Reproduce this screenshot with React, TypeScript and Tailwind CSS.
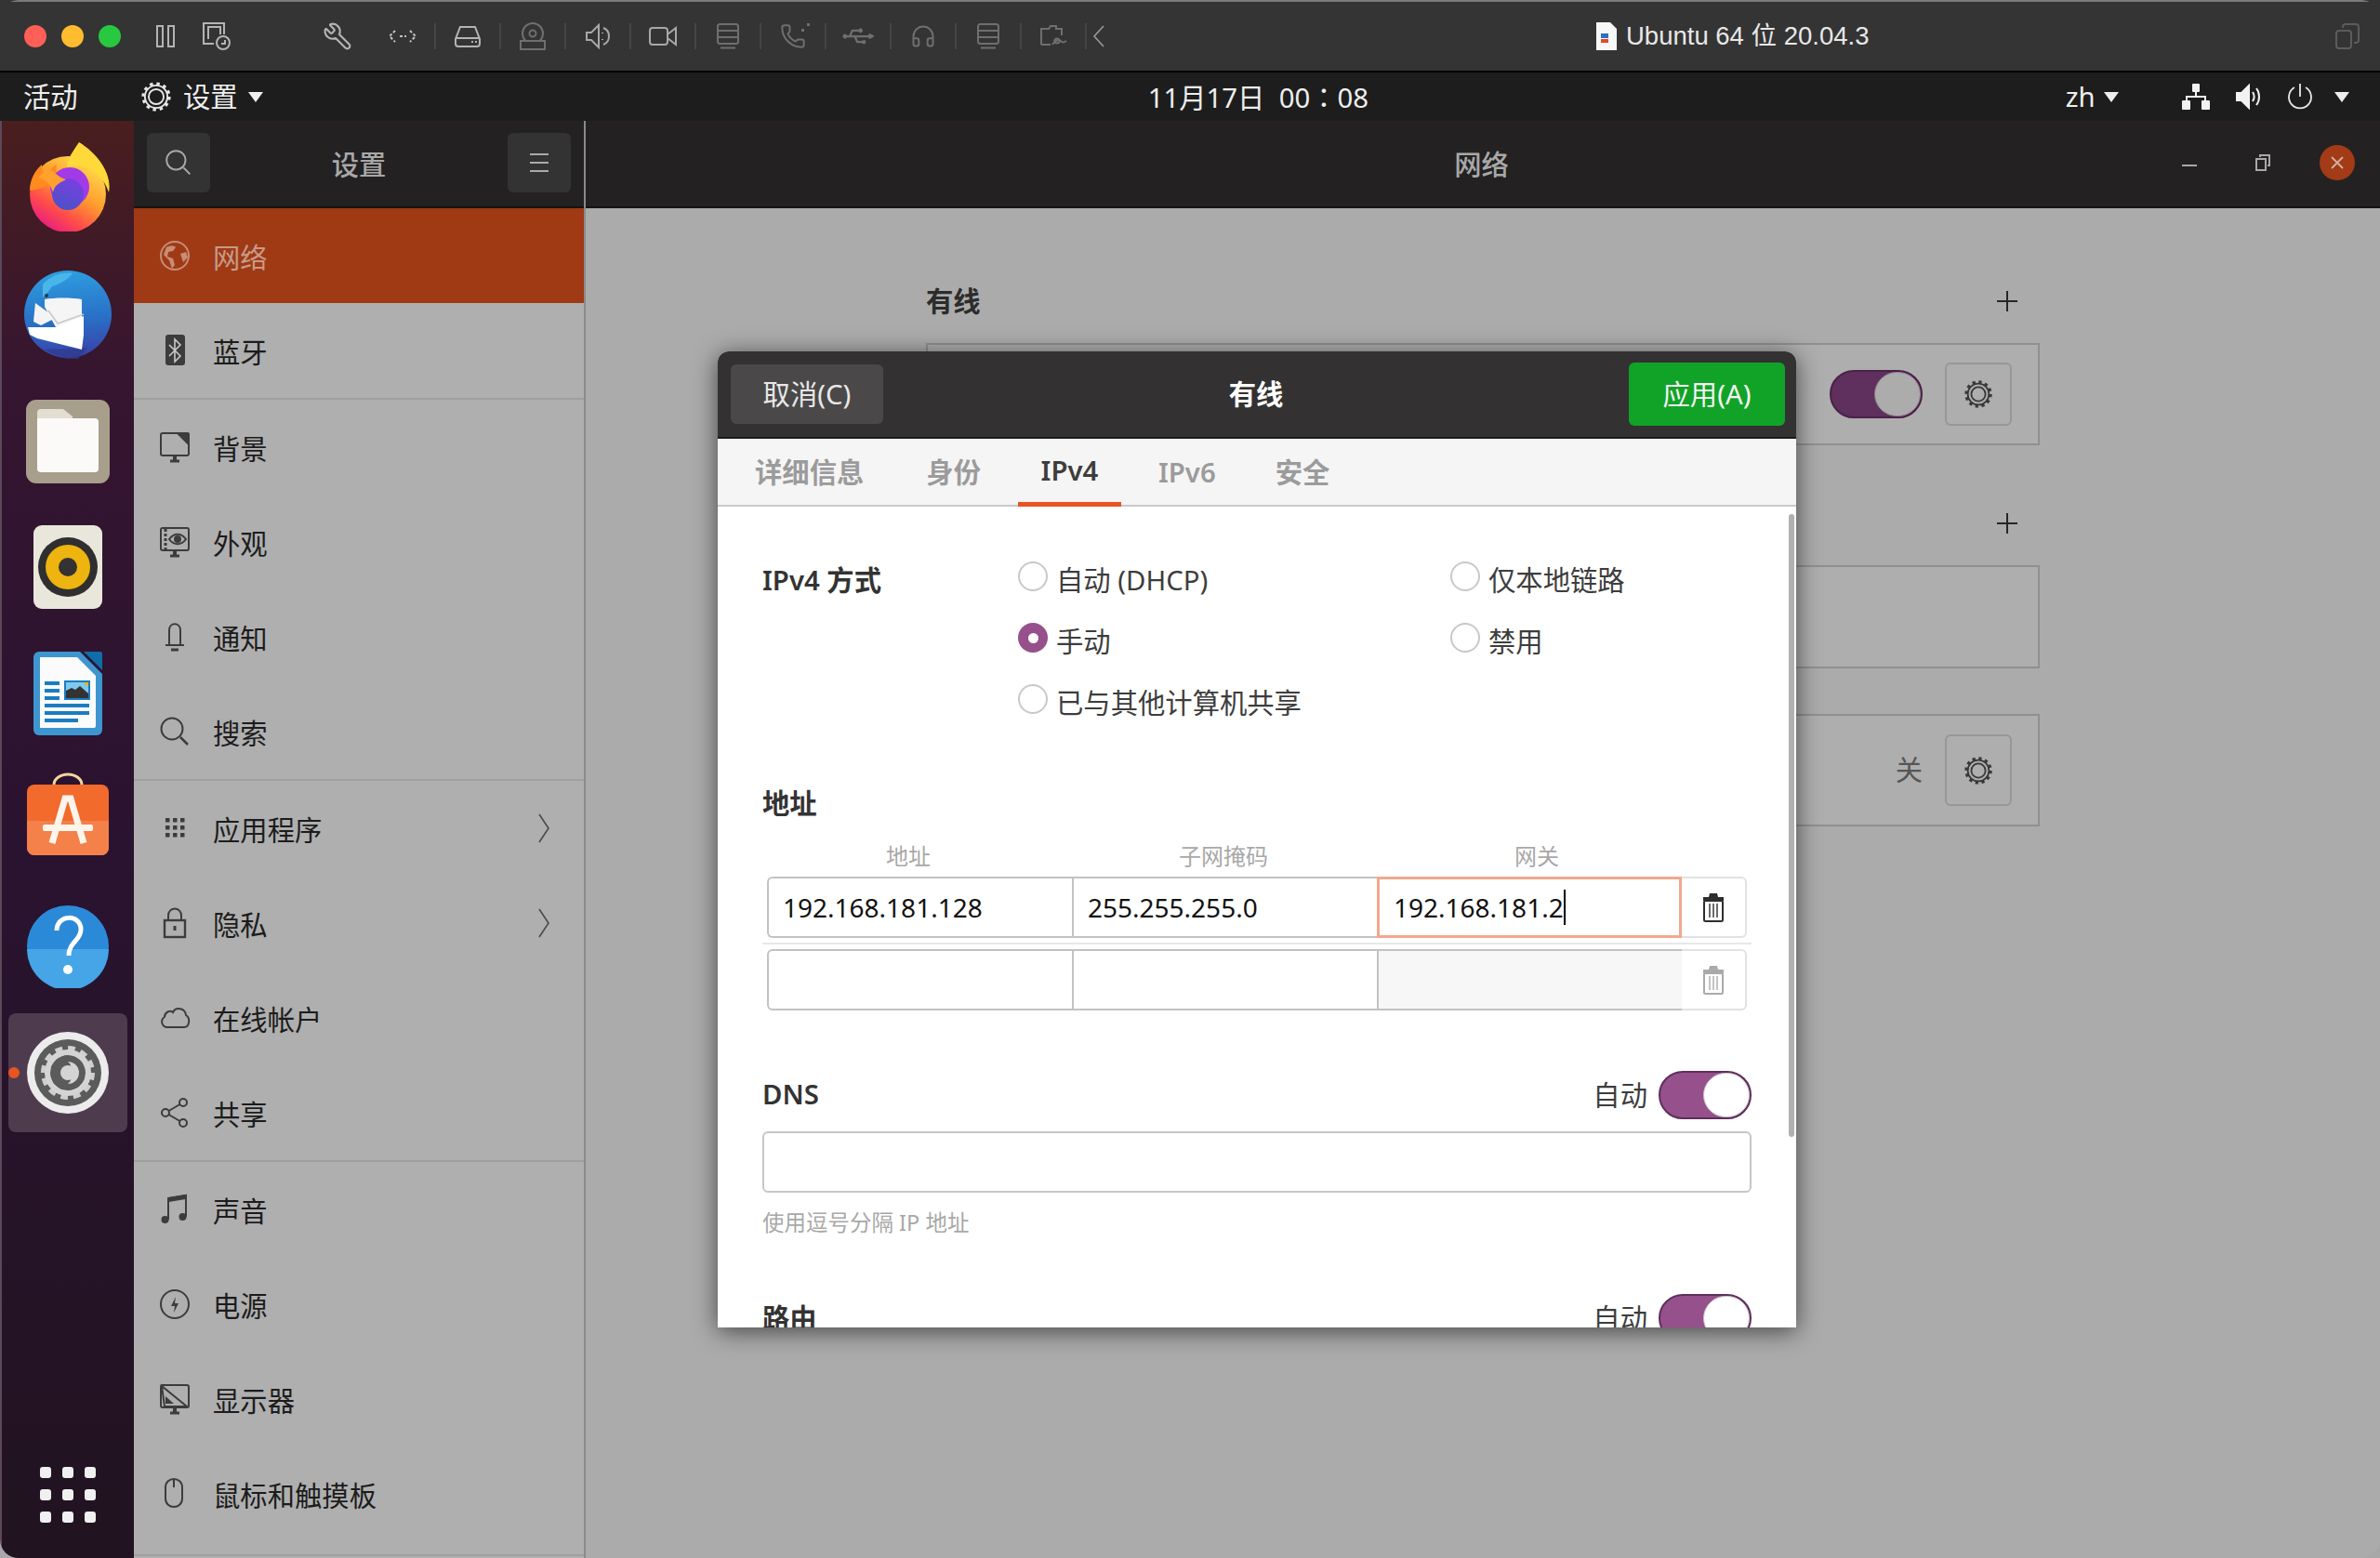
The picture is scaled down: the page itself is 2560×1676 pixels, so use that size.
import { Headphones, Phone, Usb, Wrench } from "lucide-react";
import type { ReactNode } from "react";

const Gear = ({ size = 32, color = "#3a3a3a" }: { size?: number; color?: string }) => (
  <svg width={size} height={size} viewBox="0 0 32 32" fill="none" stroke={color}>
    <circle cx="16" cy="16" r="13" strokeWidth="3.4" strokeDasharray="3.2 3.6" />
    <circle cx="16" cy="16" r="11.4" strokeWidth="1.8" />
    <circle cx="16" cy="16" r="7.6" strokeWidth="1.8" />
  </svg>
);

const Trash = ({ faded }: { faded?: boolean }) => (
  <svg width="26" height="32" viewBox="0 0 26 32" fill="none" className={faded ? "opacity-40" : ""}>
    <path d="M9 1h8l1 4h6v4H2V5h6z" fill="#2e2e2e" />
    <rect x="3" y="9" width="20" height="22" rx="1.5" stroke="#2e2e2e" strokeWidth="2" />
    <path d="M9 12v15M13 12v15M17 12v15" stroke="#2e2e2e" strokeWidth="1.4" />
  </svg>
);

const Tri = ({ w = 16 }: { w?: number }) => (
  <div className="border-t-[11px] border-t-[#eeeeee] border-x-[8px] border-x-transparent" style={{ width: w }} />
);

const Toggle = () => (
  <div className="flex justify-end w-[100px] h-[52px] shrink-0 rounded-full bg-[#96508c] border-2 border-[#5e2f5c]">
    <div className="w-[50px] h-[48px] rounded-full bg-white border border-[#c9c3c9]" />
  </div>
);

const Radio = ({ label, checked }: { label?: string; checked?: boolean }) => (
  <div className="flex items-center h-[66px]">
    {checked ? (
      <div className="flex items-center justify-center w-[32px] h-[32px] rounded-full bg-[#96508c]">
        <div className="w-[11px] h-[11px] rounded-full bg-white" />
      </div>
    ) : (
      <div className="w-[32px] h-[32px] rounded-full bg-white border-2 border-[#c8c8c8]" />
    )}
    <span className="ml-[9px] pt-[9px] text-[#3d3d3d]">{label}</span>
  </div>
);

function toolIcon(i: number) {
  const light = "#b4b4b4";
  const dim = "#6f6f6f";
  switch (i) {
    case 0:
      return (
        <svg width="32" height="14" viewBox="0 0 32 14" fill="none" stroke="#c4c4c4" strokeWidth="2" strokeDasharray="3 2">
          <path d="M8 1 2 7l6 6M24 1l6 6-6 6M13 7h7" />
        </svg>
      );
    case 1:
      return (
        <svg width="30" height="24" viewBox="0 0 30 24" fill="none" stroke={light} strokeWidth="2">
          <path d="M7 2h16l5 13v5a3 3 0 0 1-3 3H5a3 3 0 0 1-3-3v-5zM2 14h26" />
          <path d="M19 18h2M23 18h2" />
        </svg>
      );
    case 2:
      return (
        <svg width="30" height="30" viewBox="0 0 30 30" fill="none" stroke={dim} strokeWidth="2">
          <circle cx="15" cy="12" r="11" />
          <circle cx="15" cy="12" r="3.5" />
          <rect x="2" y="20" width="26" height="9" fill="#343434" />
        </svg>
      );
    case 3:
      return (
        <svg width="28" height="28" viewBox="0 0 28 28" fill="none" stroke="#a8a8a8" strokeWidth="2">
          <path d="M2 10h5l8-8v24l-8-8H2zM19 10v1M19 17v1M20 5c8 3 8 15 0 18" />
        </svg>
      );
    case 4:
      return (
        <svg width="30" height="24" viewBox="0 0 30 24" fill="none" stroke="#a8a8a8" strokeWidth="2">
          <rect x="1" y="3" width="19" height="18" rx="3" />
          <path d="M20 10 29 3v18l-9-7" />
        </svg>
      );
    case 5:
    case 9:
      return (
        <svg width="26" height="28" viewBox="0 0 26 28" fill="none" stroke={dim} strokeWidth="2">
          <rect x="2" y="1" width="22" height="21" rx="2.5" />
          <path d="M2 8h22M2 15h22M5 26.5h16" />
        </svg>
      );
    case 6:
      return (
        <div className="relative">
          <Phone size={28} color={dim} strokeWidth={1.7} />
          <div className="absolute right-[-4px] top-0 w-[3px] h-[3px] bg-[#6f6f6f]" />
          <div className="absolute right-[2px] top-[6px] w-[3px] h-[3px] bg-[#6f6f6f]" />
        </div>
      );
    case 7:
      return <Usb size={30} color={dim} strokeWidth={1.8} className="rotate-[45deg]" />;
    case 8:
      return <Headphones size={28} color={dim} strokeWidth={1.7} />;
    default:
      return (
        <svg width="30" height="26" viewBox="0 0 30 26" fill="none" stroke={dim} strokeWidth="2">
          <path d="M2 22V5h8l2-3h6v3h6v7M2 22h10M14 22c2-3 4-5 7-5s2 5 8 1" />
          <circle cx="19" cy="18" r="2.5" />
        </svg>
      );
  }
}

const MacBar = () => (
  <div className="flex items-center h-[76px] shrink-0 bg-[#343434] border-t-2 border-[#7b7b7b]">
    <div className="flex items-center gap-[16px] ml-[26px]">
      <div className="w-[24px] h-[24px] rounded-full bg-[#ff5f57]" />
      <div className="w-[24px] h-[24px] rounded-full bg-[#febc2e]" />
      <div className="w-[24px] h-[24px] rounded-full bg-[#28c840]" />
    </div>
    <svg width="20" height="24" viewBox="0 0 20 24" fill="none" stroke="#b4b4b4" strokeWidth="2" className="ml-[38px]">
      <rect x="1" y="1" width="6" height="22" />
      <rect x="13" y="1" width="6" height="22" />
    </svg>
    <svg width="30" height="30" viewBox="0 0 30 30" fill="none" stroke="#b4b4b4" strokeWidth="2" className="ml-[30px]">
      <path d="M12 23H1V1h22v12M6 18V5h13v8" />
      <circle cx="22" cy="22" r="7" />
      <path d="M24 19v4h-4" />
    </svg>
    <Wrench size={32} color="#b4b4b4" strokeWidth={1.6} className="ml-[99px] -scale-x-100" />
    <div className="ml-[20px] flex items-center">
      {Array.from({ length: 11 }).map((_, i) => (
        <div key={i} className="flex items-center">
          <div className="flex items-center justify-center w-[68px]">{toolIcon(i)}</div>
          <div className="w-[2px] h-[28px] bg-[#454545]" />
        </div>
      ))}
    </div>
    <svg width="14" height="24" viewBox="0 0 14 24" fill="none" stroke="#9a9a9a" strokeWidth="1.6" className="ml-[6px]">
      <path d="M12 1 2 12l10 11" />
    </svg>
    <svg width="22" height="30" viewBox="0 0 22 30" className="ml-[528px] shrink-0">
      <path d="M0 0h15l7 7v23H0z" fill="#f7f7f7" />
      <rect x="5" y="12" width="8" height="5" fill="#2a6fc0" />
      <rect x="5" y="18" width="8" height="4" fill="#e2492a" />
    </svg>
    <span className="ml-[10px] text-[27.5px] text-[#e8e8e8] font-['Liberation_Sans','Noto_Sans_CJK_SC',sans-serif] whitespace-nowrap">
      Ubuntu 64 位 20.04.3
    </span>
    <svg width="26" height="28" viewBox="0 0 26 28" fill="none" stroke="#5c5c5c" strokeWidth="2" className="ml-auto mr-[22px]">
      <rect x="1" y="8" width="16" height="19" rx="3" />
      <path d="M8 5V4a3 3 0 0 1 3-3h11a3 3 0 0 1 3 3v14a3 3 0 0 1-3 3h-2" />
    </svg>
  </div>
);

const TopPanel = () => (
  <div className="flex items-center h-[54px] shrink-0 bg-[#1d1d1d] border-t-2 border-black text-[#eeeeee] text-[29.33px]">
    <span className="ml-[25px] w-[126px] pt-[2px]">活动</span>
    <Gear size={34} color="#e6e6e6" />
    <span className="ml-[12px] pt-[2px]">设置</span>
    <div className="ml-[11px]">
      <Tri />
    </div>
    <span className="ml-[952px] pt-[2px] whitespace-pre w-[250px]">
      11月17日  00<span className="font-['Noto_Sans_CJK_TC',sans-serif]">：</span>08
    </span>
    <span className="ml-[737px] pt-[2px]">zh</span>
    <div className="ml-[9px]">
      <Tri />
    </div>
    <svg width="30" height="28" viewBox="0 0 30 28" className="ml-[68px]" fill="#f2f2f2">
      <rect x="11" y="0" width="8" height="9" rx="1" />
      <rect x="0" y="18" width="9" height="10" rx="1" />
      <rect x="21" y="18" width="9" height="10" rx="1" />
      <path d="M14 9h2v4h10v5h-2v-3H6v3H4v-5h10z" />
    </svg>
    <svg width="28" height="28" viewBox="0 0 28 28" className="ml-[27px]" fill="none" stroke="#f2f2f2" strokeWidth="2">
      <path d="M2 10h5l8-8v24l-8-8H2z" fill="#f2f2f2" />
      <path d="M19 9c2 3 2 7 0 10M23 5c4 5 4 13 0 18" />
    </svg>
    <svg width="28" height="30" viewBox="0 0 28 30" className="ml-[28px]" fill="none" stroke="#e8e8e8" strokeWidth="1.8">
      <path d="M14 1v14M8 5a12 12 0 1 0 12 0" />
    </svg>
    <div className="ml-[23px]">
      <Tri />
    </div>
  </div>
);

const Firefox = () => (
  <svg width="92" height="96" viewBox="0 0 92 96">
    <defs>
      <linearGradient id="ffBody" x1="0.9" y1="0.1" x2="0.3" y2="1">
        <stop offset="0" stopColor="#ffe14d" />
        <stop offset="0.45" stopColor="#ff9a2e" />
        <stop offset="0.75" stopColor="#ff4b4b" />
        <stop offset="1" stopColor="#e91e80" />
      </linearGradient>
      <linearGradient id="ffCore" x1="0.7" y1="0" x2="0.3" y2="1">
        <stop offset="0" stopColor="#7a3fe0" />
        <stop offset="1" stopColor="#4a52c8" />
      </linearGradient>
    </defs>
    <circle cx="46" cy="56" r="41" fill="url(#ffBody)" />
    <path d="M58 0C50 12 44 20 45 28c18-8 38 4 45 26C94 34 78 12 58 0Z" fill="#ffd83a" />
    <path d="M5 52c0-12 6-22 13-28 0 6 2 10 6 12 2-6 6-10 10-12-2 8 2 12 8 10-10 6-18 16-37 18Z" fill="#ff8a1e" />
    <circle cx="48" cy="48" r="21" fill="#a23ae8" />
    <circle cx="46" cy="56" r="17" fill="url(#ffCore)" />
    <path d="M14 38c6-6 10-8 14-8 4 2 8 8 16 10-4 3-12 4-14 14-2-8-8-14-16-16Z" fill="#ffa12e" />
  </svg>
);

const Thunderbird = () => (
  <svg width="98" height="96" viewBox="0 0 98 96">
    <defs>
      <linearGradient id="tbBody" x1="0.5" y1="0" x2="0.6" y2="1">
        <stop offset="0" stopColor="#2d9ee0" />
        <stop offset="0.6" stopColor="#2a6cc4" />
        <stop offset="1" stopColor="#3a3fa8" />
      </linearGradient>
    </defs>
    <circle cx="49" cy="48" r="47" fill="url(#tbBody)" />
    <path d="M22 16c8-10 24-14 32-12-4 6-14 12-22 14-4 6-8 10-10 12z" fill="#49b6ea" />
    <path d="M60 96c-10 2-24-2-36-10l46-2z" fill="#2f3a8c" opacity="0.7" />
    <path d="M14 36 36 52 20 60l-8-4z" fill="#f4f4f4" />
    <path d="M24 32c10-2 30-2 40 0v26L36 62 24 40z" fill="#f5f5f5" />
    <path d="M6 62 36 62 66 50v20l-2 16-48-12-8-4z" fill="#ffffff" />
    <path d="M28 44 38 58l28-10" fill="none" stroke="#c9c9c9" strokeWidth="1.6" />
    <circle cx="26" cy="28" r="2" fill="#333" />
  </svg>
);

const Files = () => (
  <svg width="90" height="90" viewBox="0 0 90 90">
    <rect x="0" y="0" width="90" height="90" rx="11" fill="#a79e8b" />
    <path d="M12 14a4 4 0 0 1 4-4h24l10 8v10H12z" fill="#e2ded2" />
    <path d="M12 20h62a4 4 0 0 1 4 4v50a4 4 0 0 1-4 4H16a4 4 0 0 1-4-4z" fill="#fbfaf8" />
  </svg>
);

const Rhythmbox = () => (
  <svg width="74" height="90" viewBox="0 0 74 90">
    <rect x="0" y="0" width="74" height="90" rx="9" fill="#e9e6dc" />
    <circle cx="37" cy="45" r="32" fill="#2f2f2f" />
    <circle cx="37" cy="45" r="24" fill="#eeb40f" />
    <circle cx="37" cy="45" r="10" fill="#333333" />
  </svg>
);

const Writer = () => (
  <svg width="74" height="90" viewBox="0 0 74 90">
    <path d="M6 0h44l24 24v60a6 6 0 0 1-6 6H6a6 6 0 0 1-6-6V6a6 6 0 0 1 6-6Z" fill="#3e95cf" />
    <path d="M54 0h18a2 2 0 0 1 2 2v18z" fill="#0f6da8" />
    <path d="M7 6h40l20 20v54a2 2 0 0 1-2 2H7z" fill="#fbfbfb" />
    <g fill="#1b7cc0">
      <rect x="12" y="32" width="16" height="4" />
      <rect x="12" y="40" width="16" height="4" />
      <rect x="12" y="48" width="16" height="4" />
      <rect x="12" y="56" width="48" height="4" />
      <rect x="12" y="64" width="48" height="4" />
      <rect x="12" y="72" width="36" height="4" />
      <rect x="33" y="31" width="28" height="21" />
    </g>
    <rect x="35" y="33" width="24" height="17" fill="#7ec9ee" />
    <path d="M35 50v-8l6-3 4 2 5-4 9 8v5z" fill="#333" />
    <path d="M54 33h5v5z" fill="#f4b400" />
  </svg>
);

const Store = () => (
  <svg width="90" height="90" viewBox="0 0 90 90">
    <path d="M30 16v-3a15 11 0 0 1 30 0v3" fill="none" stroke="#f0d5a0" strokeWidth="3" />
    <rect x="1" y="13" width="88" height="76" rx="8" fill="#f26a2c" />
    <path d="M1 52h88v29a8 8 0 0 1-8 8H9a8 8 0 0 1-8-8z" fill="#f4804a" />
    <path d="M28 76 42 28h6l14 48" fill="none" stroke="#fdf5ec" strokeWidth="7" />
    <rect x="18" y="56" width="54" height="7" rx="2" fill="#fdf5ec" />
  </svg>
);

const Help = () => (
  <svg width="90" height="90" viewBox="0 0 90 90">
    <circle cx="45" cy="45" r="44" fill="#2b8ad8" />
    <path d="M1 48h88a44 44 0 0 1-88 0Z" fill="#45a5e6" />
    <path d="M33 28c0-18 26-18 26-1 0 12-13 13-13 28" fill="none" stroke="#fff" strokeWidth="5" />
    <circle cx="45" cy="70" r="5" fill="#fff" />
  </svg>
);

const SettingsApp = () => (
  <svg width="90" height="90" viewBox="0 0 90 90">
    <circle cx="45" cy="45" r="44" fill="#ececec" />
    <circle cx="45" cy="45" r="36" fill="#5b5b5b" />
    <circle cx="45" cy="45" r="24" fill="none" stroke="#cfcfcf" strokeWidth="10" strokeDasharray="7 5.5" />
    <circle cx="45" cy="45" r="22" fill="none" stroke="#d4d4d4" strokeWidth="6" />
    <circle cx="45" cy="45" r="14" fill="#5b5b5b" />
    <path d="M45 33a12 12 0 0 1 0 24c6-4 6-20 0-24Z" fill="#d4d4d4" />
    <circle cx="45" cy="45" r="8" fill="#d4d4d4" />
  </svg>
);

const Dock = () => (
  <div className="flex flex-col items-center w-[144px] h-full shrink-0 border-l-2 border-[#5c4859] bg-[linear-gradient(180deg,#4a1e1e_0%,#351530_18%,#2a1330_50%,#211320_100%)]">
    <div className="flex items-center justify-center h-[139px] w-full pt-[2px]">
      <Firefox />
    </div>
    <div className="flex items-center justify-center h-[138px] w-full">
      <Thunderbird />
    </div>
    <div className="flex items-center justify-center h-[135px] w-full">
      <Files />
    </div>
    <div className="flex items-center justify-center h-[136px] w-full">
      <Rhythmbox />
    </div>
    <div className="flex items-center justify-center h-[136px] w-full">
      <Writer />
    </div>
    <div className="flex items-center justify-center h-[124px] w-full">
      <Store />
    </div>
    <div className="flex items-center justify-center h-[135px] w-full mt-[12px]">
      <Help />
    </div>
    <div className="relative flex items-center justify-center w-[128px] h-[128px] mt-[5px] rounded-[8px] bg-[#4f3b4e]">
      <SettingsApp />
      <div className="absolute left-0 top-[58px] w-[12px] h-[12px] rounded-full bg-[#e95420]" />
    </div>
    <div className="grid grid-cols-3 gap-x-[12px] gap-y-[12px] mt-auto mb-[38px]">
      {Array.from({ length: 9 }).map((_, i) => (
        <div key={i} className="w-[12px] h-[12px] rounded-[3px] bg-[#f0f0f0]" />
      ))}
    </div>
  </div>
);

const stroke = "#3c3c3c";
const Svg = ({ children, color = stroke }: { children: ReactNode; color?: string }) => (
  <svg width="34" height="34" viewBox="0 0 34 34" fill="none" stroke={color} strokeWidth="2">
    {children}
  </svg>
);

const rowIcons: Record<string, ReactNode> = {
  network: (
    <Svg color="#c88d76">
      <circle cx="17" cy="17" r="15" />
      <path d="M8 8c4-2 8-2 10 0l-3 4-5 1-1 5 6 2 2 7-3 4-3-9-6-6z" fill="#c88d76" stroke="none" />
      <path d="M23 15l6-2 2 6-5 5z" fill="#c88d76" stroke="none" />
    </Svg>
  ),
  bluetooth: (
    <svg width="34" height="34" viewBox="0 0 34 34" fill="none">
      <rect x="7" y="0" width="21" height="33" rx="3" fill="#3c3c3c" />
      <path d="m11 11 12 12-6 6V5l6 6-12 12" stroke="#c8c8c8" strokeWidth="1.6" />
    </svg>
  ),
  bg: (
    <Svg>
      <path d="M4 2h26a2 2 0 0 1 2 2v20a2 2 0 0 1-2 2H4a2 2 0 0 1-2-2V4a2 2 0 0 1 2-2Z" />
      <path d="M20 2h10a2 2 0 0 1 2 2v10z" fill="#3c3c3c" />
      <path d="M12 32h10" strokeWidth="3" />
      <path d="M17 26v5" strokeWidth="4" />
    </Svg>
  ),
  look: (
    <Svg>
      <rect x="2" y="2" width="30" height="24" rx="2" />
      <path d="M7 3v22" strokeDasharray="3 2" strokeWidth="3" />
      <path d="M11 14c5-7 13-7 18 0-5 7-13 7-18 0Z" />
      <circle cx="20" cy="14" r="3" fill="#3c3c3c" />
      <path d="M12 32h10" strokeWidth="3" />
      <path d="M17 26v5" strokeWidth="4" />
    </Svg>
  ),
  bell: (
    <Svg>
      <path d="M11 26V10c0-9 12-9 12 0v16" />
      <path d="M7 26h20" />
      <path d="M13 31h8" strokeWidth="3" />
    </Svg>
  ),
  search: (
    <Svg>
      <circle cx="14" cy="14" r="11.5" />
      <path d="m23 23 8 8" strokeWidth="2.5" />
    </Svg>
  ),
  apps: (
    <svg width="34" height="34" viewBox="0 0 34 34" fill="#3c3c3c">
      {[7, 15, 23].map((x) =>
        [6, 14, 22].map((y) => <rect key={`${x}-${y}`} x={x} y={y} width="4.5" height="4.5" />),
      )}
    </svg>
  ),
  lock: (
    <Svg>
      <rect x="6" y="14" width="22" height="18" strokeWidth="2.4" />
      <path d="M10 14V9c0-10 14-10 14 0v5" />
      <rect x="15.5" y="20" width="3" height="5" fill="#3c3c3c" stroke="none" />
    </Svg>
  ),
  cloud: (
    <Svg>
      <path d="M8 27a6 6 0 0 1-2-11C6 11 12 8 15 11c3-6 13-5 14 3 5 3 4 13-2 13z" />
    </Svg>
  ),
  share: (
    <Svg>
      <circle cx="7" cy="17" r="4" />
      <circle cx="26" cy="6" r="4" />
      <circle cx="26" cy="28" r="4" />
      <path d="m10.5 15 12-7M10.5 19l12 7" />
    </Svg>
  ),
  music: (
    <svg width="34" height="34" viewBox="0 0 34 34" fill="#3c3c3c" stroke="#3c3c3c" strokeWidth="2">
      <path d="M10 28V5l19-3v23" fill="none" />
      <path d="M10 5l19-3v3L10 8z" />
      <circle cx="6.5" cy="28" r="3" />
      <circle cx="25.5" cy="25" r="3" />
    </svg>
  ),
  power: (
    <Svg>
      <circle cx="17" cy="17" r="15" />
      <path d="M18 9l-5 10h4l-1 7 5-10h-4z" fill="#3c3c3c" stroke="none" />
    </Svg>
  ),
  display: (
    <Svg>
      <rect x="2" y="2" width="30" height="24" rx="2" />
      <path d="m3 3 27 22H6z" />
      <path d="M7 14v8h9z" fill="#3c3c3c" stroke="none" />
      <path d="M12 32h10" strokeWidth="3" />
      <path d="M17 26v5" strokeWidth="4" />
    </Svg>
  ),
  mouse: (
    <Svg>
      <path d="M7 10c0-12 18-12 18 0v12c0 12-18 12-18 0z" />
      <path d="M16 2v8" />
    </Svg>
  ),
};

const SideRow = ({ icon, label, active, more }: { icon: string; label: string; active?: boolean; more?: boolean }) => (
  <div className={`flex items-center h-[102px] shrink-0 pl-[27px] pr-[36px] ${active ? "bg-[#9f3a15] text-[#c89a88]" : "text-[#1c1c1c]"}`}>
    <div className="flex justify-center w-[34px]">{rowIcons[icon]}</div>
    <span className="ml-[24px] pt-[6px]">{label}</span>
    {more && (
      <svg width="14" height="32" viewBox="0 0 14 32" fill="none" stroke="#4a4a4a" strokeWidth="1.6" className="ml-auto">
        <path d="m2 1 10 15L2 31" />
      </svg>
    )}
  </div>
);

const Sep = () => <div className="h-[2px] shrink-0 bg-[#9f9f9f]" />;

const Sidebar = () => (
  <div className="flex flex-col w-[486px] h-full shrink-0 bg-[#afafaf] border-r-2 border-[#8b8b8b] text-[29.33px] overflow-hidden">
    <div className="flex items-center justify-between h-[94px] shrink-0 px-[14px] pb-[2px] bg-[#232122] border-b-2 border-[#151515]">
      <div className="flex items-center justify-center w-[68px] h-[64px] rounded-[6px] bg-[#333333]">
        <svg width="30" height="30" viewBox="0 0 34 34" fill="none" stroke="#a8a8a8" strokeWidth="2.2">
          <circle cx="14" cy="14" r="11.5" />
          <path d="m23 23 8 8" />
        </svg>
      </div>
      <span className="text-[#a8a8a8] font-medium pt-[6px]">设置</span>
      <div className="flex flex-col items-center justify-center gap-[7px] w-[68px] h-[64px] rounded-[6px] bg-[#333333]">
        <div className="w-[20px] h-[2px] bg-[#aaaaaa]" />
        <div className="w-[20px] h-[2px] bg-[#aaaaaa]" />
        <div className="w-[20px] h-[2px] bg-[#aaaaaa]" />
      </div>
    </div>
    <SideRow icon="network" label="网络" active />
    <SideRow icon="bluetooth" label="蓝牙" />
    <Sep />
    <SideRow icon="bg" label="背景" />
    <SideRow icon="look" label="外观" />
    <SideRow icon="bell" label="通知" />
    <SideRow icon="search" label="搜索" />
    <Sep />
    <SideRow icon="apps" label="应用程序" more />
    <SideRow icon="lock" label="隐私" more />
    <SideRow icon="cloud" label="在线帐户" />
    <SideRow icon="share" label="共享" />
    <Sep />
    <SideRow icon="music" label="声音" />
    <SideRow icon="power" label="电源" />
    <SideRow icon="display" label="显示器" />
    <SideRow icon="mouse" label="鼠标和触摸板" />
    <div className="h-[14px] shrink-0" />
    <Sep />
  </div>
);

const Plus = () => (
  <svg width="22" height="22" viewBox="0 0 22 22" stroke="#262626" strokeWidth="2">
    <path d="M11 0v22M0 11h22" />
  </svg>
);

const GearBtn = ({ h }: { h: string }) => (
  <div className={`flex items-center justify-center w-[72px] ${h} rounded-[6px] border-2 border-[#979797]`}>
    <Gear size={32} color="#383838" />
  </div>
);

const Main = () => (
  <div className="flex flex-col flex-1 h-full bg-[#ababab] min-w-0">
    <div className="grid grid-cols-[1fr_auto_1fr] items-center h-[94px] shrink-0 pb-[2px] bg-[#232122] border-b-2 border-[#151515]">
      <div />
      <span className="text-[#a8a8a8] text-[29.33px] font-medium pt-[6px] -ml-[3px]">网络</span>
      <div className="flex items-center justify-end pr-[27px]">
        <div className="w-[16px] h-[2px] mt-[6px] bg-[#a8a8a8]" />
        <svg width="16" height="18" viewBox="0 0 16 18" fill="none" stroke="#a8a8a8" strokeWidth="2" className="ml-[63px]">
          <rect x="1" y="5" width="10" height="12" />
          <path d="M5 3V1h10v11h-2" />
        </svg>
        <div className="flex items-center justify-center ml-[53px] w-[38px] h-[38px] rounded-full bg-[#a33b16]">
          <svg width="14" height="14" viewBox="0 0 14 14" stroke="#d0b0a4" strokeWidth="1.8">
            <path d="m1 1 12 12M13 1 1 13" />
          </svg>
        </div>
      </div>
    </div>
    <div className="flex flex-col pl-[366px] w-[1564px]">
      <div className="flex items-center justify-between h-[60px] mt-[70px] pr-[24px]">
        <span className="text-[29.33px] font-semibold text-[#2c2c2c] pt-[2px]">有线</span>
        <Plus />
      </div>
      <div className="flex items-center justify-end gap-[24px] h-[110px] mt-[15px] pr-[28px] border-2 border-[#909090] bg-[#aeaeae]">
        <div className="flex justify-end w-[100px] h-[52px] rounded-full bg-[#5f2f5e] border-2 border-[#4a2148]">
          <div className="w-[50px] h-[48px] rounded-full bg-[#acacac] border border-[#8a7c8a]" />
        </div>
        <GearBtn h="h-[68px]" />
      </div>
      <div className="flex items-center justify-end h-[60px] mt-[54px] pr-[24px]">
        <Plus />
      </div>
      <div className="h-[111px] mt-[15px] border-2 border-[#909090] bg-[#aeaeae]" />
      <div className="flex items-center justify-end gap-[24px] h-[121px] mt-[49px] pr-[28px] border-2 border-[#909090] bg-[#aeaeae] text-[29.33px] text-[#555555]">
        <span>关</span>
        <GearBtn h="h-[77px]" />
      </div>
    </div>
  </div>
);

const Cell = ({ children, focus, shaded, first }: { children?: ReactNode; focus?: boolean; shaded?: boolean; first?: boolean }) => (
  <div
    className={`flex items-center w-[328px] h-full pl-[15px] text-[28px] text-[#111111] ${
      focus ? "border-[3px] border-[#f4a78e]" : "border-y-2 border-l-2 border-[#c2c2c2]"
    } ${shaded ? "bg-[#f7f7f7]" : "bg-white"} ${first ? "rounded-l-[6px]" : ""}`}
  >
    {children}
  </div>
);

const Dialog = () => (
  <div className="absolute left-[772px] top-[378px] flex flex-col w-[1160px] h-[1050px] overflow-hidden rounded-t-[12px] bg-white shadow-[0_4px_26px_rgba(0,0,0,0.6)] text-[29.33px]">
    <div className="flex items-center justify-between h-[94px] shrink-0 pl-[14px] pr-[12px] bg-[#333132] border-b-2 border-[#1c1c1c]">
      <div className="flex items-center justify-center w-[164px] h-[64px] pt-[2px] rounded-[6px] bg-[#4a4849] text-[#e8e8e8]">取消(C)</div>
      <span className="font-semibold text-white pt-[2px]">有线</span>
      <div className="flex items-center justify-center w-[168px] h-[68px] pt-[2px] rounded-[6px] bg-[#11a327] text-[#f4f4f4]">应用(A)</div>
    </div>
    <div className="flex items-stretch h-[73px] shrink-0 pl-[40px] bg-[#f5f5f5] border-b-2 border-[#c9c9c9] font-semibold text-[#9b9b9b]">
      <span className="flex items-center pt-[2px]">详细信息</span>
      <span className="flex items-center pt-[2px] ml-[67px]">身份</span>
      <span className="flex items-center justify-center pt-[2px] ml-[40px] w-[111px] border-b-[5px] border-[#e95420] text-[#3d3d3d] -mb-[2px]">IPv4</span>
      <span className="flex items-center pt-[2px] ml-[40px]">IPv6</span>
      <span className="flex items-center pt-[2px] ml-[64px]">安全</span>
    </div>
    <div className="flex flex-col px-[48px] pt-[42px]">
      <div className="grid grid-cols-[275px_465px_1fr]">
        <span className="flex items-center h-[66px] pt-[9px] font-semibold text-[#333333]">IPv4 方式</span>
        <Radio label="自动 (DHCP)" />
        <Radio label="仅本地链路" />
        <div />
        <Radio label="手动" checked />
        <Radio label="禁用" />
        <div />
        <Radio label="已与其他计算机共享" />
      </div>
      <span className="flex items-center h-[40px] mt-[60px] font-semibold text-[#333333]">地址</span>
      <div className="flex items-center h-[30px] mt-[21px] text-[24px] text-[#a8a8a8]">
        <span className="ml-[133px]">地址</span>
        <span className="ml-[267px]">子网掩码</span>
        <span className="ml-[265px]">网关</span>
      </div>
      <div className="flex h-[66px] mt-[7px] mx-[5px]">
        <Cell first>192.168.181.128</Cell>
        <Cell>255.255.255.0</Cell>
        <Cell focus>
          192.168.181.2
          <span className="inline-block w-[2px] h-[38px] bg-black" />
        </Cell>
        <div className="flex items-center justify-center flex-1 border-2 border-l-0 border-[#e2e2e2] rounded-r-[6px]">
          <Trash />
        </div>
      </div>
      <div className="h-[2px] mt-[5px] bg-[#e8e8e8]" />
      <div className="flex h-[66px] mt-[5px] mx-[5px]">
        <Cell first />
        <Cell />
        <Cell shaded />
        <div className="flex items-center justify-center flex-1 border-2 border-l-0 border-[#e2e2e2] rounded-r-[6px]">
          <Trash faded />
        </div>
      </div>
      <div className="flex items-center h-[52px] mt-[65px]">
        <span className="font-semibold text-[#333333]">DNS</span>
        <span className="ml-auto mr-[12px] text-[#3d3d3d] pt-[2px]">自动</span>
        <Toggle />
      </div>
      <div className="h-[66px] mt-[13px] rounded-[6px] border-2 border-[#c6c6c6]" />
      <span className="flex items-center h-[30px] mt-[18px] text-[23.5px] text-[#a8a8a8]">使用逗号分隔 IP 地址</span>
      <div className="flex items-center h-[52px] mt-[61px]">
        <span className="font-semibold text-[#333333] pt-[2px]">路由</span>
        <span className="ml-auto mr-[12px] text-[#3d3d3d] pt-[2px]">自动</span>
        <Toggle />
      </div>
    </div>
    <div className="absolute left-[1152px] top-[175px] w-[6px] h-[670px] rounded-full bg-[#b0b0b0]" />
  </div>
);

export default function App() {
  return (
    <div className="bg-gradient-to-b from-[#343434] to-[#a8a8a8] w-[2560px] h-[1676px]">
      <div className="relative flex flex-col w-full h-full overflow-hidden rounded-[20px] font-['Noto_Sans','Noto_Sans_CJK_SC',sans-serif]">
        <MacBar />
        <TopPanel />
        <div className="flex flex-1 min-h-0">
          <Dock />
          <Sidebar />
          <Main />
        </div>
        <Dialog />
      </div>
    </div>
  );
}
